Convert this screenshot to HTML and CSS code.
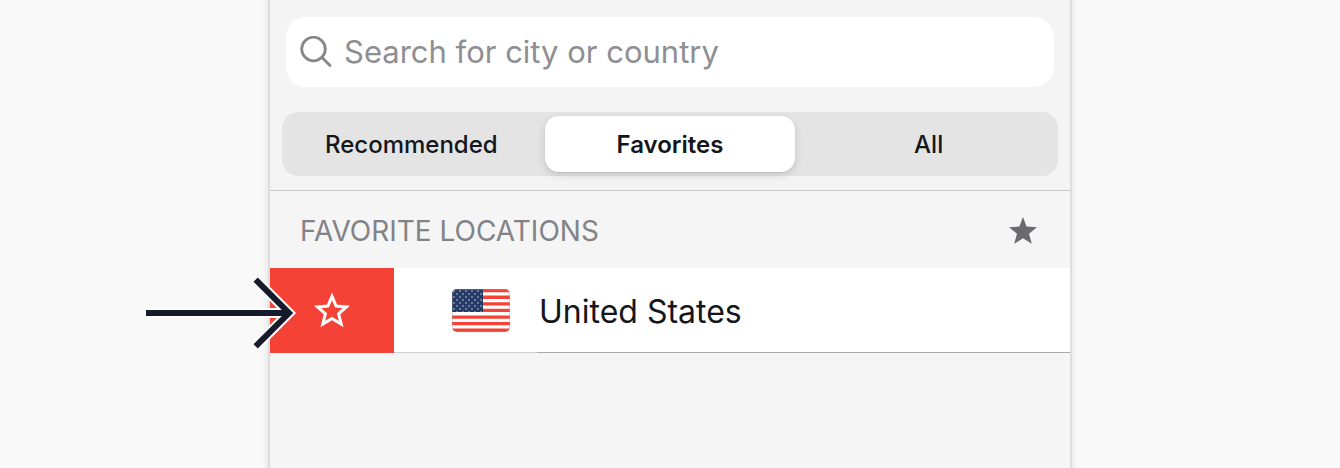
FILE: index.html
```html
<!DOCTYPE html>
<html lang="en">
<head>
  <meta charset="utf-8">
  <meta content="width=device-width, initial-scale=1.0" name="viewport" />
  <title>Favorite locations</title>
  <link rel="stylesheet" href="styles.css">
</head>
<body>
  <main class="panel">
    <div class="toolbar">
      <label class="search">
        <svg class="search-icon" viewBox="0 0 32 32" aria-hidden="true">
          <circle cx="13.5" cy="13" r="11.8" />
          <path d="M22 21.5 L30 29.5" />
        </svg>
        <input type="search" placeholder="Search for city or country" aria-label="Search for city or country">
      </label>
      <div class="tabs">
        <button type="button" class="tab">Recommended</button>
        <button type="button" class="tab active" aria-pressed="true">Favorites</button>
        <button type="button" class="tab">All</button>
      </div>
    </div>

    <div class="list-header">
      <h2>FAVORITE LOCATIONS</h2>
      <svg class="star" viewBox="0 0 28 27" aria-hidden="true">
        <path d="M14 0 L17.6 9.6 L28 10.2 L20 16.8 L22.8 26.8 L14 21.2 L5.2 26.8 L8 16.8 L0 10.2 L10.4 9.6 Z" />
      </svg>
    </div>

    <div class="location">
      <button type="button" class="remove" aria-label="Remove from favorites">
        <svg viewBox="0 0 38 37" aria-hidden="true">
          <path d="M19 4.4 L23.1 14 L33.4 14.9 L25.6 21.8 L28.2 32 L19 26.5 L9.8 32 L12.4 21.8 L4.6 14.9 L14.9 14 Z" />
        </svg>
      </button>
      <div class="flag-cell">
        <svg class="flag" viewBox="0 0 58 43" aria-hidden="true">
          <defs>
            <clipPath id="flag-shape"><rect width="58" height="43" rx="5" /></clipPath>
            <pattern id="flag-stars" width="6" height="6" patternUnits="userSpaceOnUse">
              <circle cx="2" cy="2" r="0.9" />
              <circle cx="5" cy="5" r="0.9" />
            </pattern>
          </defs>
          <g clip-path="url(#flag-shape)">
            <rect class="flag-white" width="58" height="43" />
            <path class="flag-red" d="M0 1.65H58M0 8.25H58M0 14.85H58M0 21.45H58M0 28.05H58M0 34.65H58M0 41.25H58" />
            <rect class="flag-blue" width="31" height="23" />
            <rect fill="url(#flag-stars)" class="flag-dots" width="31" height="23" />
          </g>
          <rect class="flag-edge" x="0.5" y="0.5" width="57" height="42" rx="5" />
        </svg>
      </div>
      <div class="name">United States</div>

      <svg class="arrow" viewBox="0 0 156 78" aria-hidden="true">
        <path class="halo" d="M2 39 H146 M112.6 4.6 L147 39 L112.6 73.4" />
        <path class="line" d="M4 39 H146 M113.6 5.6 L147 39 L113.6 72.4" />
      </svg>
    </div>
  </main>
</body>
</html>
```
FILE: styles.css
```css
* {
  box-sizing: border-box;
}

body {
  margin: 0;
  background: #f9f9f9;
  color: #14161c;
  font-family: Inter, "Liberation Sans", sans-serif;
}

button, input {
  margin: 0;
  padding: 0;
  border: 0;
  color: inherit;
  font: inherit;
}

.panel {
  width: 100%;
  max-width: 800px;
  min-height: 100vh;
  margin: 0 auto;
  background: #f5f5f5;
  box-shadow: 0 0 0 2px #dedede, 0 0 5px 4px #e8e8e8;
}

.toolbar {
  padding: 17px 12px 14px;
  border-bottom: 1px solid #c8c8c8;
  background: #f4f4f4;
}

/* search box */
.search {
  display: flex;
  align-items: center;
  gap: 12px;
  height: 70px;
  margin: 0 4px 25px;
  padding: 0 14px;
  border-radius: 20px;
  background: #fff;
}

.search-icon {
  flex: none;
  width: 32px;
  height: 32px;
  fill: none;
  stroke: #87878b;
  stroke-width: 2.8;
  stroke-linecap: round;
}

.search input {
  flex: 1;
  min-width: 0;
  background: none;
  outline: none;
  font-size: 31px;
  line-height: 40px;
}

.search input::placeholder {
  color: #8e8e93;
  opacity: 1;
}

/* segmented control */
.tabs {
  display: grid;
  grid-template-columns: repeat(3, 1fr);
  height: 64px;
  border-radius: 16px;
  background: #e4e4e4;
}

.tab {
  margin: 4px;
  border-radius: 14px;
  background: none;
  font-size: 24px;
  font-weight: 500;
  cursor: pointer;
}

.tab.active {
  background: #fff;
  box-shadow: 0 3px 8px rgba(0, 0, 0, 0.14), 0 1px 1px rgba(0, 0, 0, 0.06);
  font-weight: 600;
}

.list-header {
  display: flex;
  align-items: center;
  justify-content: space-between;
  height: 77px;
  padding: 2px 33px 0 30px;
}

.list-header h2 {
  margin: 0;
  color: #828287;
  font-size: 28px;
  font-weight: 400;
}

.star {
  width: 28px;
  height: 27px;
  fill: #6b6b6e;
}

/* swiped row */
.location {
  position: relative;
  display: flex;
  height: 85px;
  background: #fff;
}

.remove {
  display: flex;
  flex: none;
  align-items: center;
  justify-content: center;
  width: 124px;
  background: #f44336;
  cursor: pointer;
}

.remove svg {
  width: 38px;
  height: 37px;
  fill: none;
  stroke: #fff;
  stroke-width: 3;
}

.flag-cell {
  display: flex;
  flex: none;
  align-items: center;
  width: 143px;
  padding: 1px 0 0 58px;
  border-bottom: 1px solid #cfcfcf;
}

.flag {
  width: 58px;
  height: 43px;
}

.flag-white {
  fill: #fff;
}

.flag-red {
  stroke: #f44336;
  stroke-width: 3.3;
}

.flag-blue {
  fill: #263a66;
}

.flag-dots {
  opacity: 0.7;
}

.flag pattern {
  fill: #b8c4dc;
}

.flag-edge {
  fill: none;
  stroke: #999;
  stroke-opacity: 0.4;
}

.name {
  display: flex;
  flex: 1;
  align-items: center;
  padding: 2px 0 0 2px;
  border-bottom: 1px solid #a9a9a9;
  font-size: 32px;
}

/* pointer laid over the row */
.arrow {
  position: absolute;
  top: 6px;
  left: -128px;
  width: 156px;
  height: 78px;
  fill: none;
  pointer-events: none;
}

.halo {
  stroke: #fff;
  stroke-width: 10;
}

.line {
  stroke: #151b2b;
  stroke-width: 6;
}
```
